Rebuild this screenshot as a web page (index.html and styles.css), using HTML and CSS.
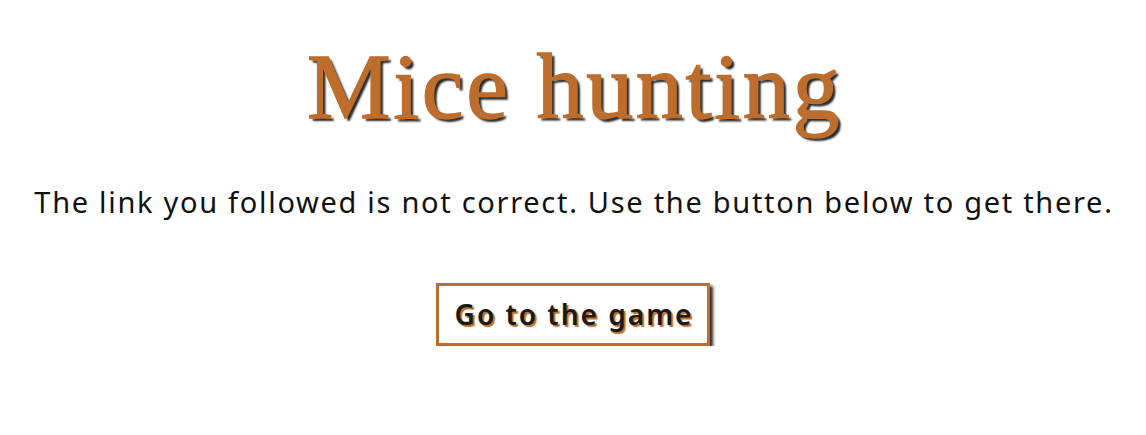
FILE: index.html
```html
<!DOCTYPE html>
<html lang="en">
<head>
<meta charset="utf-8">
<title>Mice hunting</title>
<link rel="stylesheet" href="styles.css">
</head>
<body>
<main class="page">
  <h1 class="title">Mice hunting</h1>
  <p class="message">The link you followed is not correct. Use the button below to get there.</p>
  <a class="game-button" href="#">Go to the game</a>
</main>
</body>
</html>
```
FILE: styles.css
```css
html, body {
  margin: 0;
  padding: 0;
  background: #ffffff;
}
.page {
  display: flex;
  flex-direction: column;
  align-items: center;
  padding-top: 36px;
  font-family: "Noto Sans", "Lato", sans-serif;
}
.title {
  margin: 0;
  padding-left: 3px;
  font-family: "Liberation Serif", serif;
  font-weight: normal;
  font-size: 94px;
  line-height: 100px;
  letter-spacing: 2.6px;
  color: #bd6d2c;
  -webkit-text-stroke: 1.4px #bd6d2c;
  text-shadow: 3px 3px 2px #2a2a2a;
}
.message {
  margin: 46px 0 0;
  padding-left: 2px;
  font-size: 29px;
  line-height: 40px;
  color: #111;
  letter-spacing: 1.7px;
}
.game-button {
  margin-top: 61px;
  padding: 8px 14px 8px 16px;
  border: 3px solid #bd6d2c;
  box-shadow: 3px 3px 3px #2a2a2a;
  font-size: 28px;
  line-height: 41px;
  font-weight: 600;
  letter-spacing: 2px;
  color: #1a1a1a;
  text-decoration: none;
  text-shadow: 2px 2px 1px #bd6d2c;
}
```
